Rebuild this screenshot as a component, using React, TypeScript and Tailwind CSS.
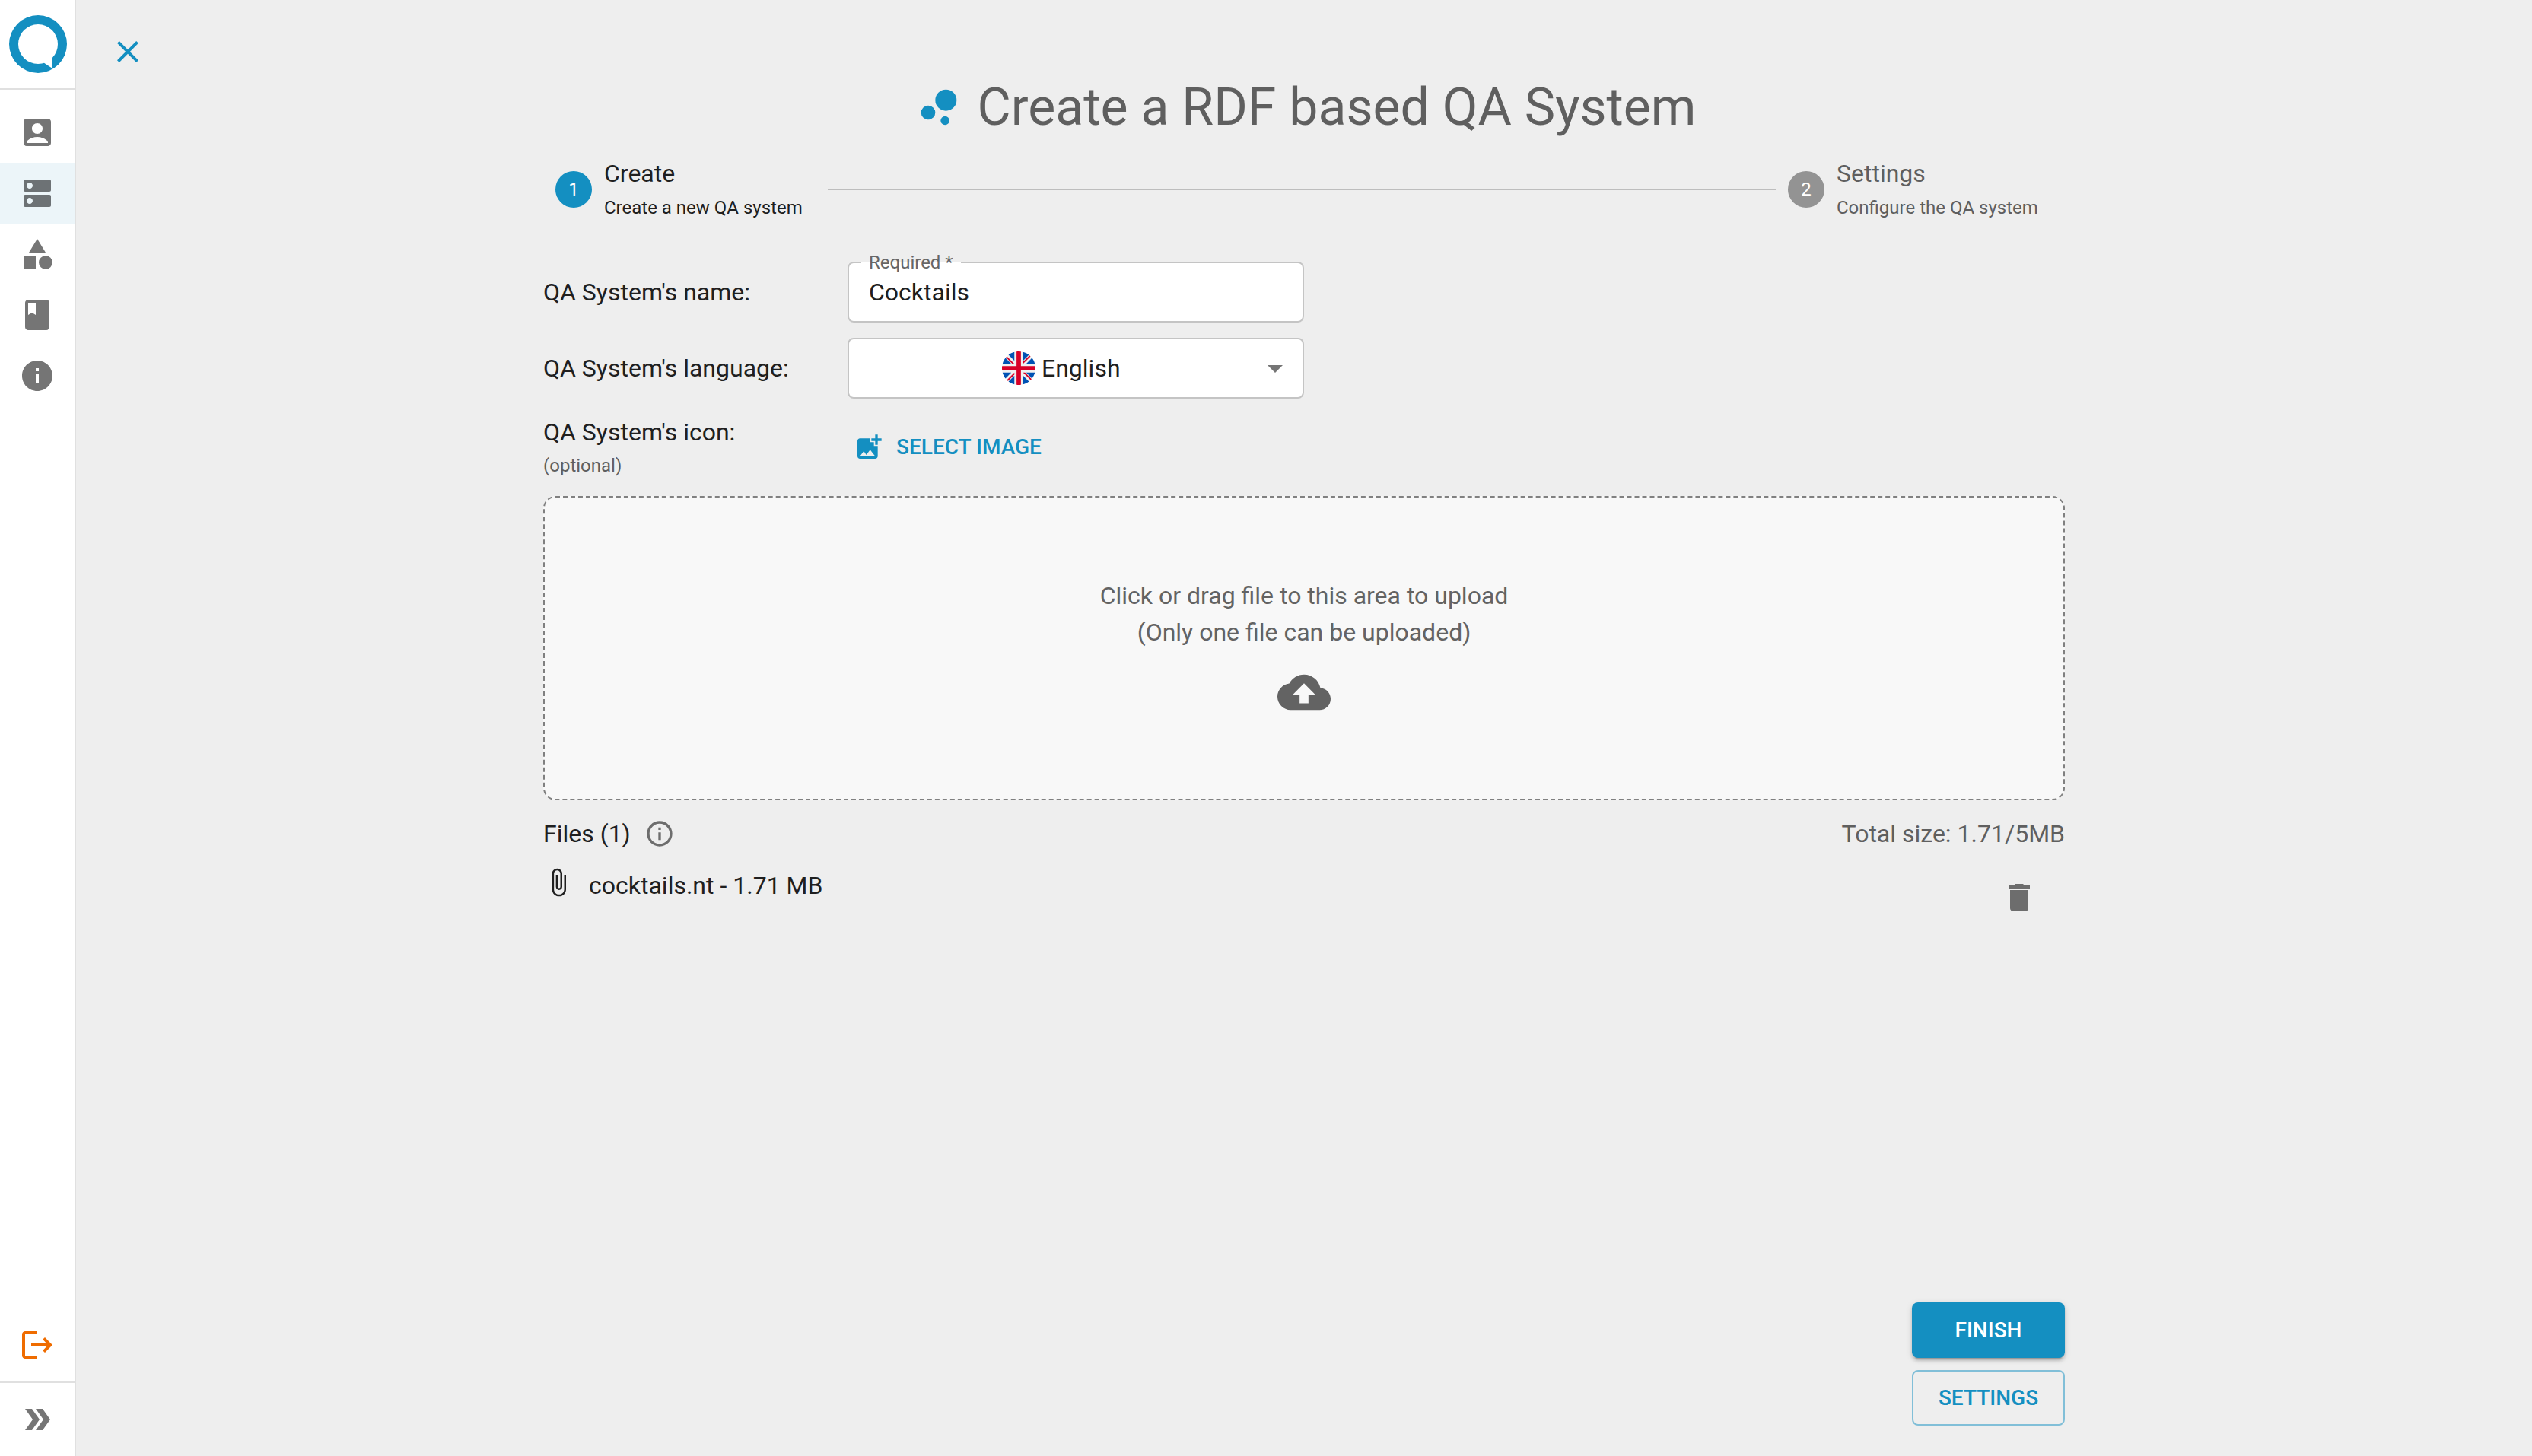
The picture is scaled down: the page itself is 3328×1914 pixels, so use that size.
import React from "react";

type IconProps = { d: string; className: string };

function Icon({ d, className }: IconProps) {
  return (
    <svg viewBox="0 0 24 24" fill="currentColor" aria-hidden="true" className={`shrink-0 ${className}`}>
      <path d={d} />
    </svg>
  );
}

const icons = {
  account:
    "M19 3H5c-1.1 0-2 .9-2 2v14c0 1.1.9 2 2 2h14c1.1 0 2-.9 2-2V5c0-1.1-.9-2-2-2zm-7 3c1.93 0 3.5 1.57 3.5 3.5S13.93 13 12 13s-3.5-1.57-3.5-3.5S10.07 6 12 6zm7 13H5v-.23c0-.62.28-1.2.76-1.58C7.47 15.82 9.64 15 12 15s4.53.82 6.24 2.19c.48.38.76.97.76 1.58V19z",
  systems:
    "M20 13H4c-.55 0-1 .45-1 1v6c0 .55.45 1 1 1h16c.55 0 1-.45 1-1v-6c0-.55-.45-1-1-1zM7 19c-1.1 0-2-.9-2-2s.9-2 2-2 2 .9 2 2-.9 2-2 2zM20 3H4c-.55 0-1 .45-1 1v6c0 .55.45 1 1 1h16c.55 0 1-.45 1-1V4c0-.55-.45-1-1-1zM7 9c-1.1 0-2-.9-2-2s.9-2 2-2 2 .9 2 2-.9 2-2 2z",
  category:
    "M12 2l-5.5 9h11L12 2zM17.5 13a4.5 4.5 0 1 0 0 9 4.5 4.5 0 0 0 0-9zM3 13.5h8v8H3z",
  book: "M18 2H6c-1.1 0-2 .9-2 2v16c0 1.1.9 2 2 2h12c1.1 0 2-.9 2-2V4c0-1.1-.9-2-2-2zM6 4h5v8l-2.5-1.5L6 12V4z",
  info: "M12 2C6.48 2 2 6.48 2 12s4.48 10 10 10 10-4.48 10-10S17.52 2 12 2zm1 15h-2v-6h2v6zm0-8h-2V7h2v2z",
  infoOutlined:
    "M11 7h2v2h-2zm0 4h2v6h-2zm1-9C6.48 2 2 6.48 2 12s4.48 10 10 10 10-4.48 10-10S17.52 2 12 2zm0 18c-4.41 0-8-3.59-8-8s3.59-8 8-8 8 3.59 8 8-3.59 8-8 8z",
  logout:
    "M17 7l-1.41 1.41L18.17 11H8v2h10.17l-2.58 2.58L17 17l5-5zM4 5h8V3H4c-1.1 0-2 .9-2 2v14c0 1.1.9 2 2 2h8v-2H4V5z",
  expand: "M15.5 5H11l5 7-5 7h4.5l5-7zM8.5 5H4l5 7-5 7h4.5l5-7z",
  close:
    "M19 6.41L17.59 5 12 10.59 6.41 5 5 6.41 10.59 12 5 17.59 6.41 19 12 13.41 17.59 19 19 17.59 13.41 12z",
  bubbles:
    "M7.2 11.2a3.2 3.2 0 1 0 0 6.4 3.2 3.2 0 0 0 0-6.4zM14.8 16a2 2 0 1 0 0 4 2 2 0 0 0 0-4zM15.2 4a4.8 4.8 0 1 0 0 9.6 4.8 4.8 0 0 0 0-9.6z",
  arrowDown: "M7 10l5 5 5-5z",
  addPhoto:
    "M19 7v2.99s-1.99.01-2 0V7h-3s.01-1.99 0-2h3V2h2v3h3v2h-3zm-3 4V8h-3V5H5c-1.1 0-2 .9-2 2v12c0 1.1.9 2 2 2h12c1.1 0 2-.9 2-2v-8h-3zM5 19l3-4 2 3 3-4 4 5H5z",
  upload:
    "M19.35 10.04C18.67 6.59 15.64 4 12 4 9.11 4 6.6 5.64 5.35 8.04 2.34 8.36 0 10.91 0 14c0 3.31 2.69 6 6 6h13c2.76 0 5-2.24 5-5 0-2.64-2.05-4.78-4.65-4.96zM14 13v4h-4v-4H7l5-5 5 5h-3z",
  attach:
    "M16.5 6v11.5c0 2.21-1.79 4-4 4s-4-1.79-4-4V5c0-1.38 1.12-2.5 2.5-2.5s2.5 1.12 2.5 2.5v10.5c0 .55-.45 1-1 1s-1-.45-1-1V6H10v9.5c0 1.38 1.12 2.5 2.5 2.5s2.5-1.12 2.5-2.5V5c0-2.21-1.79-4-4-4S7 2.79 7 5v12.5c0 3.04 2.46 5.5 5.5 5.5s5.5-2.46 5.5-5.5V6h-1.5z",
  trash: "M6 19c0 1.1.9 2 2 2h8c1.1 0 2-.9 2-2V7H6v12zM19 4h-3.5l-1-1h-5l-1 1H5v2h14V4z",
};

const navItems = [
  { label: "Account", icon: icons.account, active: false },
  { label: "QA Systems", icon: icons.systems, active: true },
  { label: "Categories", icon: icons.category, active: false },
  { label: "Documentation", icon: icons.book, active: false },
  { label: "About", icon: icons.info, active: false },
];

function Logo() {
  return (
    <svg viewBox="0 0 76 76" className="ml-[2px] h-[76px] w-[76px]" aria-hidden="true">
      <circle cx="38" cy="38" r="38" fill="#148fc1" />
      <circle cx="38" cy="38" r="26" fill="#fff" />
      <path d="M42 62.6 C43.5 62.4 45 62.4 46 62.8 L57 70 V55 L50 46 L38 54 Z" fill="#fff" />
    </svg>
  );
}

function UkFlag({ className }: { className: string }) {
  return (
    <svg viewBox="0 0 512 512" className={className} aria-hidden="true">
      <circle cx="256" cy="256" r="256" fill="#f0f0f0" />
      <path
        fill="#0052b4"
        d="M52.92 100.142c-20.109 26.163-35.272 56.318-44.101 89.077h133.178L52.92 100.142zM503.181 189.219c-8.829-32.758-23.993-62.913-44.101-89.076l-89.075 89.076h133.176zM8.819 322.784c8.83 32.758 23.993 62.913 44.101 89.075l89.074-89.075H8.819zM411.858 52.921c-26.163-20.109-56.317-35.272-89.076-44.102v133.177l89.076-89.075zM100.142 459.079c26.163 20.109 56.318 35.272 89.076 44.102V370.005l-89.076 89.074zM189.217 8.819c-32.758 8.83-62.913 23.993-89.075 44.101l89.075 89.075V8.819zM322.783 503.181c32.758-8.83 62.913-23.993 89.075-44.101l-89.075-89.075v133.176zM370.005 322.784l89.075 89.076c20.108-26.162 35.272-56.318 44.101-89.076H370.005z"
      />
      <path
        fill="#d80027"
        d="M509.833 222.609H289.392V2.167A258.556 258.556 0 0 0 256 0c-11.319 0-22.461.744-33.391 2.167v220.441H2.167A258.556 258.556 0 0 0 0 256c0 11.319.744 22.461 2.167 33.391h220.441v220.442a258.35 258.35 0 0 0 66.783 0V289.392h220.442A258.533 258.533 0 0 0 512 256c0-11.317-.744-22.461-2.167-33.391z"
      />
      <path
        fill="#d80027"
        d="M322.783 322.784L437.019 437.02a256.636 256.636 0 0 0 15.048-16.435l-97.802-97.802h-31.482v.001zM189.217 322.784h-.002L74.98 437.019a256.636 256.636 0 0 0 16.435 15.048l97.802-97.804v-31.479zM189.217 189.219v-.002L74.981 74.98a256.636 256.636 0 0 0-15.048 16.435l97.803 97.803h31.481zM322.783 189.219L437.02 74.981a256.328 256.328 0 0 0-16.435-15.047l-97.802 97.803v31.482z"
      />
    </svg>
  );
}

function Sidebar() {
  return (
    <aside className="flex w-[100px] shrink-0 flex-col border-r-2 border-[#e0e0e0] bg-white text-[#757575]">
      <a href="#home" aria-label="Home" className="flex h-[118px] items-center justify-center border-b-2 border-[#e0e0e0]">
        <Logo />
      </a>
      <nav className="flex flex-col pt-4">
        {navItems.map((item) => (
          <a
            key={item.label}
            href="#nav"
            aria-label={item.label}
            className={`flex h-20 items-center justify-center ${item.active ? "bg-[#ecf5f9] text-[#6d7275]" : ""}`}
          >
            <Icon d={item.icon} className="size-12" />
          </a>
        ))}
      </nav>
      <button aria-label="Log out" className="mt-auto mb-2 flex h-20 items-center justify-center text-[#ef6c00]">
        <Icon d={icons.logout} className="size-12" />
      </button>
      <button aria-label="Expand menu" className="flex h-[98px] items-center justify-center border-t-2 border-[#e0e0e0]">
        <Icon d={icons.expand} className="size-12" />
      </button>
    </aside>
  );
}

type StepProps = { number: number; title: string; detail: string; active: boolean; className: string };

function Step({ number, title, detail, active, className }: StepProps) {
  return (
    <li
      className={`flex shrink-0 items-center gap-4 px-4 ${active ? "text-[#1f1f1f]" : "text-[#5f5f5f]"} ${className}`}
    >
      <span
        className={`flex size-12 shrink-0 items-center justify-center rounded-full text-2xl text-white ${
          active ? "bg-[#148fc1]" : "bg-[#939393]"
        }`}
      >
        {number}
      </span>
      <span className="flex flex-col gap-[2px] whitespace-nowrap">
        <span className="text-[32px] leading-[46px]">{title}</span>
        <span className="text-2xl leading-10">{detail}</span>
      </span>
    </li>
  );
}

export default function App() {
  return (
    <div className="flex min-h-screen bg-[#eeeeee] font-[Roboto,sans-serif] text-[32px] leading-[48px] text-[#1f1f1f]">
      <Sidebar />
      <main className="flex min-w-0 flex-1 flex-col pt-11 pb-10">
        <button aria-label="Close" className="ml-11 size-12 text-[#148fc1]">
          <Icon d={icons.close} className="size-12" />
        </button>

        <div className="mx-auto flex w-full max-w-[2000px] flex-1 flex-col">
          <h1 className="mt-[7px] flex items-center justify-center gap-4 text-[68px] leading-[84px] text-[#5f5f5f]">
            <Icon d={icons.bubbles} className="size-[70px] text-[#148fc1]" />
            Create a RDF based QA System
          </h1>

          <ol className="mt-[22px] flex items-center">
            <Step number={1} title="Create" detail="Create a new QA system" active className="w-[374px]" />
            <li aria-hidden="true" className="h-[2px] flex-1 bg-[#bdbdbd]" />
            <Step number={2} title="Settings" detail="Configure the QA system" active={false} className="w-[380px]" />
          </ol>

          <form className="mt-[51px] flex flex-1 flex-col gap-5" onSubmit={(e) => e.preventDefault()}>
            <div className="flex h-20 items-center">
              <label htmlFor="system-name" className="w-1/5">
                QA System's name:
              </label>
              <fieldset className="-mt-[15px] w-3/10 rounded-lg border-2 border-[#c4c4c4] bg-white px-4">
                <legend className="px-[10px] text-2xl leading-8 text-[#666666]">Required *</legend>
                <input
                  id="system-name"
                  type="text"
                  required
                  defaultValue="Cocktails"
                  className="mb-[15px] block h-[46px] w-full bg-transparent px-[10px] outline-none"
                />
              </fieldset>
            </div>

            <div className="flex h-20 items-center">
              <label htmlFor="system-language" className="w-1/5">
                QA System's language:
              </label>
              <div className="relative w-3/10">
                <select
                  id="system-language"
                  defaultValue="en"
                  className="block h-20 w-full appearance-none rounded-lg border-2 border-[#c4c4c4] bg-white pl-[253px] outline-none"
                >
                  <option value="en">English</option>
                </select>
                <UkFlag className="pointer-events-none absolute top-[18px] left-[203px] size-11" />
                <Icon
                  d={icons.arrowDown}
                  className="pointer-events-none absolute top-4 right-[14px] size-12 text-[#757575]"
                />
              </div>
            </div>

            <div className="flex items-center">
              <div className="flex w-1/5 flex-col">
                <span>QA System's icon:</span>
                <span className="text-2xl leading-10 text-[#5f5f5f]">(optional)</span>
              </div>
              <button type="button" className="flex items-center gap-4 px-2 text-[28px] font-medium text-[#148fc1]">
                <Icon d={icons.addPhoto} className="size-10" />
                SELECT IMAGE
              </button>
            </div>

            <button
              type="button"
              className="flex h-[400px] flex-col items-center justify-center gap-5 rounded-2xl border-2 border-dashed border-[#808080] bg-[#f8f8f8] text-[#636363]"
            >
              <span>
                Click or drag file to this area to upload
                <br />
                (Only one file can be uploaded)
              </span>
              <Icon d={icons.upload} className="size-[70px]" />
            </button>

            <div className="flex items-center justify-between">
              <div className="flex items-center gap-[18px]">
                <span>Files (1)</span>
                <button type="button" aria-label="File information" className="text-[#6d6d6d]">
                  <Icon d={icons.infoOutlined} className="size-10" />
                </button>
              </div>
              <span className="text-[#5f5f5f]">Total size: 1.71/5MB</span>
            </div>

            <ul>
              <li className="flex items-start gap-5 pr-5">
                <Icon d={icons.attach} className="size-10" />
                <span className="flex-1">cocktails.nt - 1.71 MB</span>
                <button type="button" aria-label="Delete cocktails.nt" className="p-4 text-[#6d6d6d]">
                  <Icon d={icons.trash} className="size-12" />
                </button>
              </li>
            </ul>

            <div className="mt-auto flex w-[201px] flex-col gap-4 self-end text-[28px] font-medium">
              <button
                type="submit"
                className="h-[73px] rounded-lg bg-[#148fc1] text-white shadow-[0_6px_2px_-4px_rgba(0,0,0,0.2),0_4px_4px_0_rgba(0,0,0,0.14),0_2px_10px_0_rgba(0,0,0,0.12)]"
              >
                FINISH
              </button>
              <button type="button" className="h-[73px] rounded-lg border-2 border-[#148fc1]/50 text-[#148fc1]">
                SETTINGS
              </button>
            </div>
          </form>
        </div>
      </main>
    </div>
  );
}
